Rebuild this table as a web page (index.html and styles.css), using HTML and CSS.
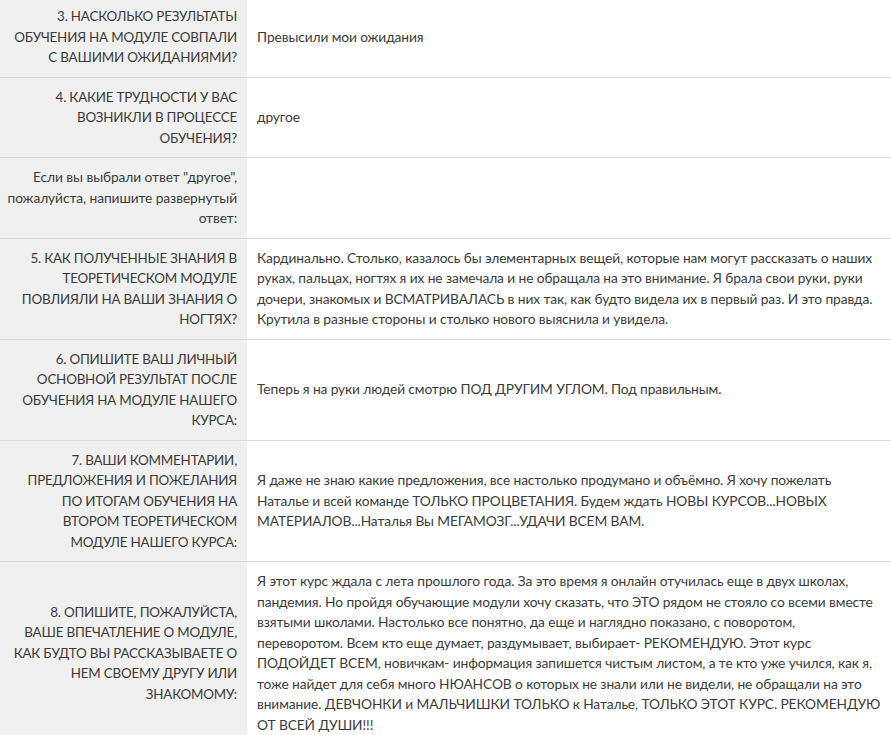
FILE: index.html
```html
<!DOCTYPE html>
<html lang="ru">
<head>
<meta charset="utf-8">
<title>Анкета</title>
<link rel="stylesheet" href="styles.css">
</head>
<body>
<table class="answers">
  <tr>
    <th class="q">3. НАСКОЛЬКО РЕЗУЛЬТАТЫ<br>ОБУЧЕНИЯ НА МОДУЛЕ СОВПАЛИ<br>С ВАШИМИ ОЖИДАНИЯМИ?</th>
    <td class="a">Превысили мои ожидания</td>
  </tr>
  <tr>
    <th class="q">4. КАКИЕ ТРУДНОСТИ У ВАС<br>ВОЗНИКЛИ В ПРОЦЕССЕ<br>ОБУЧЕНИЯ?</th>
    <td class="a">другое</td>
  </tr>
  <tr>
    <th class="q sub">Если вы выбрали ответ "другое",<br>пожалуйста, напишите развернутый<br>ответ:</th>
    <td class="a"></td>
  </tr>
  <tr>
    <th class="q">5. КАК ПОЛУЧЕННЫЕ ЗНАНИЯ В<br>ТЕОРЕТИЧЕСКОМ МОДУЛЕ<br>ПОВЛИЯЛИ НА ВАШИ ЗНАНИЯ О<br>НОГТЯХ?</th>
    <td class="a">Кардинально. Столько, казалось бы элементарных вещей, которые нам могут рассказать о наших<br>руках, пальцах, ногтях я их не замечала и не обращала на это внимание. Я брала свои руки, руки<br>дочери, знакомых и ВСМАТРИВАЛАСЬ в них так, как будто видела их в первый раз. И это правда.<br>Крутила в разные стороны и столько нового выяснила и увидела.</td>
  </tr>
  <tr>
    <th class="q">6. ОПИШИТЕ ВАШ ЛИЧНЫЙ<br>ОСНОВНОЙ РЕЗУЛЬТАТ ПОСЛЕ<br>ОБУЧЕНИЯ НА МОДУЛЕ НАШЕГО<br>КУРСА:</th>
    <td class="a">Теперь я на руки людей смотрю ПОД ДРУГИМ УГЛОМ. Под правильным.</td>
  </tr>
  <tr>
    <th class="q">7. ВАШИ КОММЕНТАРИИ,<br>ПРЕДЛОЖЕНИЯ И ПОЖЕЛАНИЯ<br>ПО ИТОГАМ ОБУЧЕНИЯ НА<br>ВТОРОМ ТЕОРЕТИЧЕСКОМ<br>МОДУЛЕ НАШЕГО КУРСА:</th>
    <td class="a">Я даже не знаю какие предложения, все настолько продумано и объёмно. Я хочу пожелать<br>Наталье и всей команде ТОЛЬКО ПРОЦВЕТАНИЯ. Будем ждать НОВЫ КУРСОВ...НОВЫХ<br>МАТЕРИАЛОВ...Наталья Вы МЕГАМОЗГ...УДАЧИ ВСЕМ ВАМ.</td>
  </tr>
  <tr>
    <th class="q">8. ОПИШИТЕ, ПОЖАЛУЙСТА,<br>ВАШЕ ВПЕЧАТЛЕНИЕ О МОДУЛЕ,<br>КАК БУДТО ВЫ РАССКАЗЫВАЕТЕ О<br>НЕМ СВОЕМУ ДРУГУ ИЛИ<br>ЗНАКОМОМУ:</th>
    <td class="a">Я этот курс ждала с лета прошлого года. За это время я онлайн отучилась еще в двух школах,<br>пандемия. Но пройдя обучающие модули хочу сказать, что ЭТО рядом не стояло со всеми вместе<br>взятыми школами. Настолько все понятно, да еще и наглядно показано, с поворотом,<br>переворотом. Всем кто еще думает, раздумывает, выбирает- РЕКОМЕНДУЮ. Этот курс<br>ПОДОЙДЕТ ВСЕМ, новичкам- информация запишется чистым листом, а те кто уже учился, как я,<br>тоже найдет для себя много НЮАНСОВ о которых не знали или не видели, не обращали на это<br>внимание. ДЕВЧОНКИ и МАЛЬЧИШКИ ТОЛЬКО к Наталье, ТОЛЬКО ЭТОТ КУРС. РЕКОМЕНДУЮ<br>ОТ ВСЕЙ ДУШИ!!!</td>
  </tr>
</table>
</body>
</html>
```

FILE: styles.css
```css
html, body {
  margin: 0;
  padding: 0;
  background: #ffffff;
}

body {
  font-family: Lato, "Noto Sans", "Liberation Sans", sans-serif;
  font-size: 14px;
  line-height: 20.5px;
  color: #3b3b3b;
}

.answers {
  width: 891px;
  margin-top: -3px;
  border-collapse: collapse;
  table-layout: fixed;
}

.answers tr {
  border-bottom: 1px solid #dcdcdc;
}

.q {
  width: 233px;
  padding: 9px 10px 9px 4px;
  background: #f0f0f0;
  font-weight: normal;
  font-size: 13.4px;
  letter-spacing: -0.2px;
  text-align: right;
  vertical-align: middle;
  white-space: nowrap;
}

.q.sub {
  font-size: 13.8px;
  letter-spacing: -0.1px;
}

.a {
  padding: 9px 10px;
  font-size: 13.75px;
  letter-spacing: -0.1px;
  text-align: left;
  vertical-align: middle;
  white-space: nowrap;
}
```
